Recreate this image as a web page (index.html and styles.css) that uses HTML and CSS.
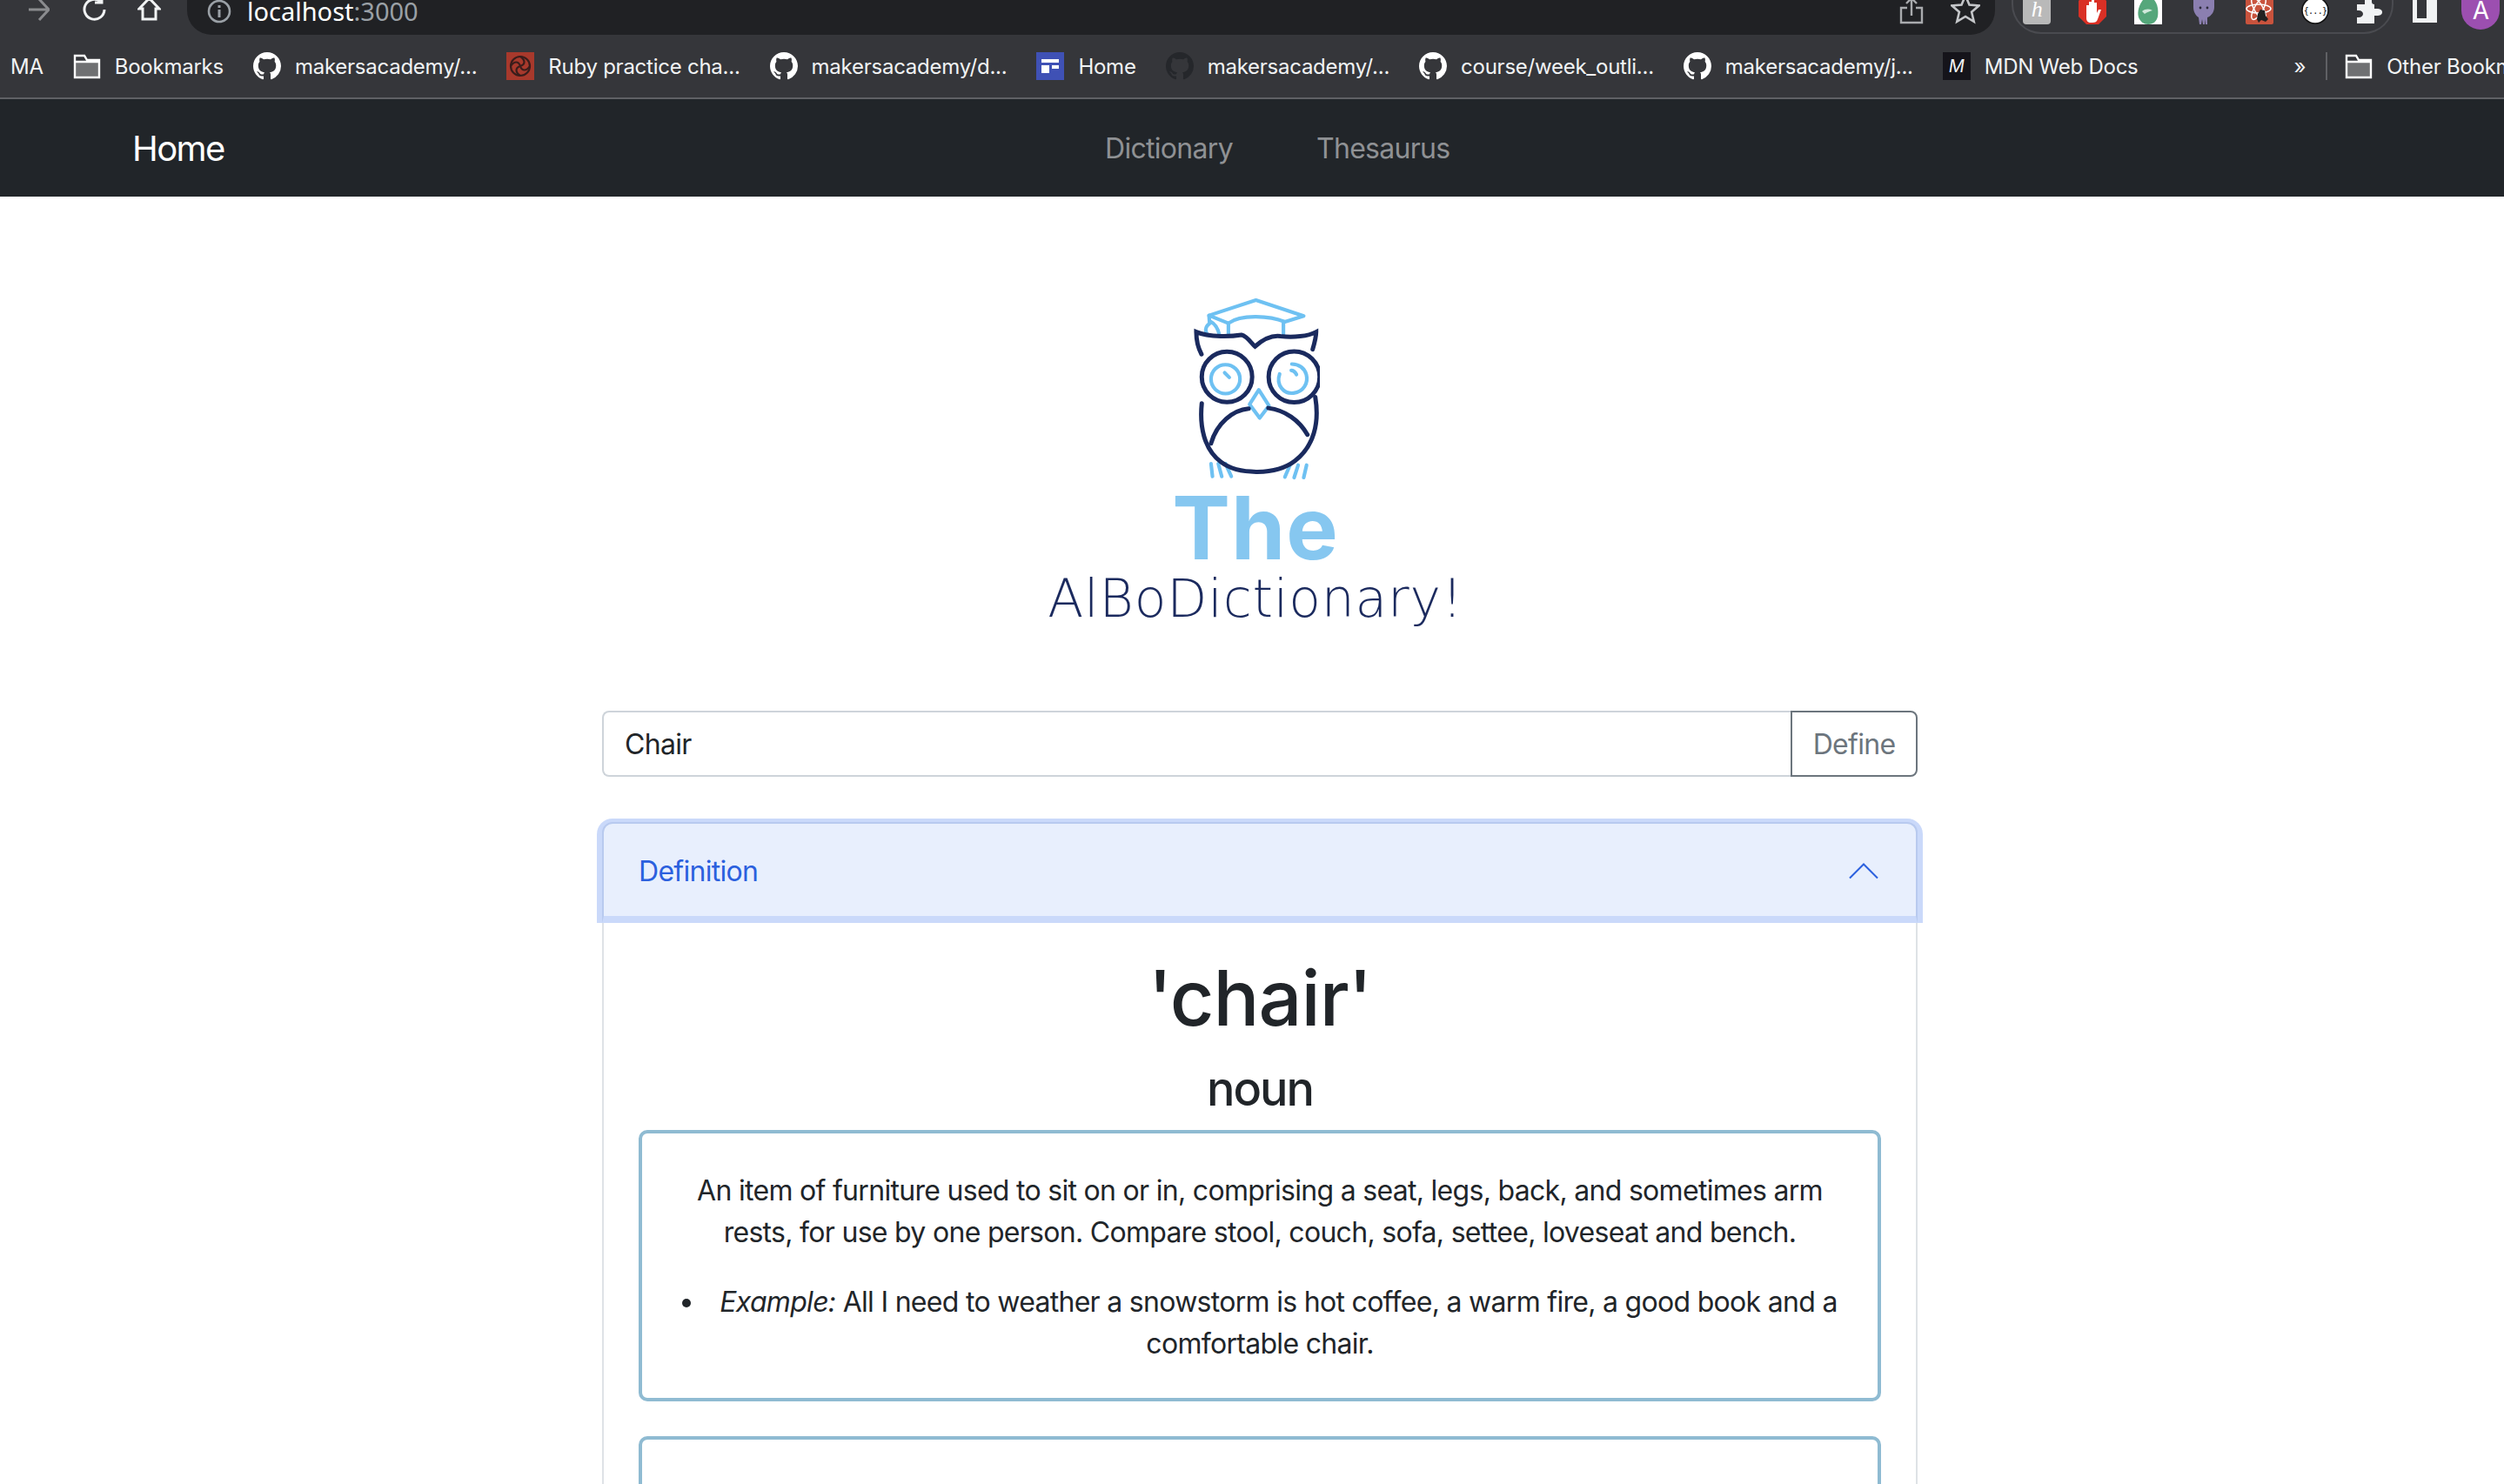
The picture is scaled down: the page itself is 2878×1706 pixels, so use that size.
FILE: index.html
```html
<!DOCTYPE html>
<html lang="en">
<head>
    <meta charset="UTF-8">
    <title>The AlBoDictionary</title>
    <link rel="stylesheet" href="styles.css">
</head>
<body>
    <svg class="sprites" width="0" height="0">
        <symbol id="gh" viewBox="0 0 16 16"><path d="M8 0C3.58 0 0 3.58 0 8c0 3.54 2.29 6.53 5.47 7.59.4.07.55-.17.55-.38 0-.19-.01-.82-.01-1.49-2.01.37-2.53-.49-2.69-.94-.09-.23-.48-.94-.82-1.13-.28-.15-.68-.52-.01-.53.63-.01 1.08.58 1.23.82.72 1.21 1.87.87 2.33.66.07-.52.28-.87.51-1.07-1.78-.2-3.64-.89-3.64-3.95 0-.87.31-1.59.82-2.15-.08-.2-.36-1.02.08-2.12 0 0 .67-.21 2.2.82.64-.18 1.32-.27 2-.27.68 0 1.36.09 2 .27 1.53-1.04 2.2-.82 2.2-.82.44 1.1.16 1.92.08 2.12.51.56.82 1.27.82 2.15 0 3.07-1.87 3.75-3.65 3.95.29.25.54.73.54 1.48 0 1.07-.01 1.93-.01 2.2 0 .21.15.46.55.38A8.013 8.013 0 0016 8c0-4.42-3.58-8-8-8z"/></symbol>
        <symbol id="folder" viewBox="0 0 32 32"><path d="M2 12h28v17H2z" fill="#6f7072"/><path d="M2 4h11l3 5h14v20H2zM2 11h28" fill="none" stroke="#fff" stroke-width="2.4"/></symbol>
    </svg>

    <div class="page">
        <!-- Browser chrome -->
        <div class="toolbar">
            <svg class="tool-icon back" width="26" height="40" viewBox="0 0 26 40"><path d="M2 18h22M14 6l11 12-11 12" fill="none" stroke="#8a8b8e" stroke-width="3"/></svg>
            <svg class="tool-icon reload" width="27" height="40" viewBox="0 0 27 40"><path d="M25 18a11.5 11.5 0 1 1-4-9M22 2v8h-8" fill="none" stroke="#f1f3f4" stroke-width="3"/></svg>
            <svg class="tool-icon home" width="27" height="40" viewBox="0 0 27 40"><path d="M13.500 5L25 17h-4v12H6V17H2z" fill="none" stroke="#f1f3f4" stroke-width="3"/></svg>
            <div class="omnibox">
                <svg class="info" width="28" height="28" viewBox="0 0 28 28"><circle cx="14" cy="14" r="12" fill="none" stroke="#9aa0a6" stroke-width="2.6"/><path d="M14 12v9M14 7v3" stroke="#9aa0a6" stroke-width="3"/></svg>
                <span class="url">localhost<span class="url-port">:3000</span></span>
                <svg class="share" width="28" height="40" viewBox="0 0 28 40"><path d="M9 13H2v17h24V13h-7M14 22V2M8 8l6-6 6 6" fill="none" stroke="#a9abae" stroke-width="2.4"/></svg>
                <svg class="star" width="34" height="40" viewBox="0 0 34 40"><path d="M17 3l4.500 10.500 11 1-8.400 7.300 2.600 11L17 27l-9.700 5.800 2.600-11L1.500 14.500l11-1z" fill="none" stroke="#c4c6c9" stroke-width="2.600"/></svg>
            </div>
            <div class="ext-pill">
                <div class="ext ext-h">h</div>
                <svg class="ext-svg" width="32" height="40" viewBox="0 0 32 40"><path d="M9 0h14l9 9v18l-9 9H9l-9-9V9z" transform="translate(0 -8)" fill="#d93025"/><path d="M9 14V6h3v6-10h3v10-12h3v12-9h3v12l2-4h3l-4 11c-1 3-3 4-6 4h-2c-3 0-5-2-5-5z" fill="#fff"/></svg>
                <svg class="ext-svg" width="32" height="40" viewBox="0 0 32 40"><path d="M0 0h32v28H0z" fill="#fff"/><path d="M10 0h13c4 5 5 12 4 19-1 5-5 9-11 9-5 0-9-3-11-8C3 13 6 5 10 0z" fill="#55a77b"/><path d="M9 13c4-3 8-3 12-1-3 1-7 2-9 4z" fill="#cfe8da"/></svg>
                <svg class="ext-svg" width="32" height="40" viewBox="0 0 32 40"><path d="M4 0h24v8c0 6-4 11-8 12v8h-2v-6l-1 6h-2l-1-6-1 6h-2l-1-8C7 18 4 14 4 8z" fill="#8b7fb0"/><circle cx="12" cy="9" r="1.400" fill="#2d2b3a"/><circle cx="20" cy="9" r="1.400" fill="#2d2b3a"/></svg>
                <svg class="ext-svg" width="32" height="40" viewBox="0 0 32 40"><path d="M0 0h32v26a2 2 0 0 1-2 2H2a2 2 0 0 1-2-2z" fill="#c9533d"/><g fill="none" stroke="#fff" stroke-width="1.500"><ellipse cx="15" cy="10" rx="14" ry="5"/><ellipse cx="15" cy="10" rx="14" ry="5" transform="rotate(60 15 10)"/><ellipse cx="15" cy="10" rx="14" ry="5" transform="rotate(120 15 10)"/></g><path d="M17 11l5 1 1 6 3 4-3 3-5-2-3 3-2-4 1-6z" fill="#222"/></svg>
                <svg class="ext-svg" width="32" height="40" viewBox="0 0 32 40"><circle cx="16" cy="12" r="15" fill="#fff" stroke="#111" stroke-width="1.500"/><text class="json-mark" x="16" y="16" text-anchor="middle">{...}</text></svg>
                <svg class="ext-svg" width="30" height="40" viewBox="0 0 30 40"><path d="M9 0h8v2c0 2 1 3 3 3h0v5h3c3 0 6 1 6 4s-3 4-6 4h-3v9H0v-7h2c3 0 5-2 5-4s-2-4-5-4H0V5h9z" fill="#f1f3f4"/></svg>
            </div>
            <svg class="panel" width="28" height="40" viewBox="0 0 28 40"><path d="M0 0h28v26H0z" fill="#f1f3f4"/><path d="M5 0h11v21H5z" fill="#35363a"/></svg>
            <div class="avatar">A</div>
        </div>

        <div class="bookmarks">
            <span class="bm-ma">MA</span>
            <div class="bm"><svg class="bm-icon"><use href="#folder"/></svg>Bookmarks</div>
            <div class="bm"><svg class="bm-icon gh"><use href="#gh"/></svg>makersacademy/...</div>
            <div class="bm"><svg class="bm-icon" viewBox="0 0 32 32"><path d="M0 0h32v32H0z" fill="#a8392c"/><g fill="none" stroke="#3a1d1b" stroke-width="2.200"><circle cx="16" cy="16" r="11"/><path d="M16 5c6 4 6 9 0 11s-6 7 0 11M5 16c4-6 9-6 11 0s7 6 11 0"/></g></svg>Ruby practice cha...</div>
            <div class="bm"><svg class="bm-icon gh"><use href="#gh"/></svg>makersacademy/d...</div>
            <div class="bm"><svg class="bm-icon" viewBox="0 0 32 32"><path d="M0 0h32v32H0z" fill="#3f51b5"/><path d="M6 8h20v4H6zM6 15h9v9H6zM18 15h8v4h-8z" fill="#fff"/></svg>Home</div>
            <div class="bm"><svg class="bm-icon gh-dark"><use href="#gh"/></svg>makersacademy/...</div>
            <div class="bm"><svg class="bm-icon gh"><use href="#gh"/></svg>course/week_outli...</div>
            <div class="bm"><svg class="bm-icon gh"><use href="#gh"/></svg>makersacademy/j...</div>
            <div class="bm"><div class="bm-icon mdn">M</div>MDN Web Docs</div>
            <span class="bm-more">»</span>
            <div class="bm bm-other"><svg class="bm-icon"><use href="#folder"/></svg>Other Bookmarks</div>
        </div>

        <!-- Navigation Bar -->
        <nav class="navbar">
            <a href="#" class="navbar-brand">Home</a>
            <div class="navbar-links">
                <a href="#">Dictionary</a>
                <a href="#">Thesaurus</a>
            </div>
        </nav>

        <div class="container">
            <div class="logo">
                <svg width="147" height="213" viewBox="270 30 440 640">
                    <g fill="none" stroke="#6ec1f2" stroke-width="12.500" stroke-linejoin="round" stroke-linecap="round">
                        <path d="M328 98L490 45 655 100 590 120C540 100 440 92 395 125z"/>
                        <path d="M395 125v42M585 120v46M328 98l2 28c-18 12-16 32-4 40M332 118c16 8 28 28 32 48"/>
                        <circle cx="385" cy="318" r="50"/>
                        <path d="M572 300c-14 40 16 70 48 66 34-4 52-34 44-64-6-22-26-36-50-36"/>
                        <path d="M382 296l16 16M612 288c8 0 14 6 18 14"/>
                        <path d="M500 355l35 55-32 42-35-47z"/>
                        <path d="M335 610l5 44M360 610l12 44M385 610l20 44M610 610l-20 46M636 615l-14 43M665 615l-10 43"/>
                    </g>
                    <g fill="none" stroke="#1a2a5e" stroke-width="15" stroke-linecap="round">
                        <path d="M302 232c-12-22-18-52-18-77 46 20 126 15 156 10 20 5 35 30 47 40 23-20 53-40 88-35 45 5 95 0 123-15 0 20-6 40-12 60"/>
                        <circle cx="390" cy="310" r="87"/>
                        <circle cx="622" cy="310" r="88"/>
                        <path d="M303 402c-8 78 7 158 67 203 60 45 190 45 255-5 65-50 85-130 70-220"/>
                        <path d="M465 420c-55 5-110 50-130 120M533 418c57 7 107 42 135 92"/>
                    </g>
                </svg>
                <div class="logo-the">The</div>
                <div class="logo-name">AlBoDictionary!</div>
            </div>

            <form class="input-group">
                <input type="text" value="Chair">
                <button type="button">Define</button>
            </form>

            <div class="accordion">
                <div class="accordion-header">
                    <span>Definition</span>
                    <svg width="40" height="40" viewBox="0 0 16 16"><path d="M1.600 11.400L8 5l6.400 6.400" fill="none" stroke="#2b60de" stroke-width="0.800"/></svg>
                </div>
                <div class="accordion-body">
                    <h1>'chair'</h1>
                    <h3>noun</h3>
                    <div class="meaning">
                        <p>An item of furniture used to sit on or in, comprising a seat, legs, back, and sometimes arm rests, for use by one person. Compare stool, couch, sofa, settee, loveseat and bench.</p>
                        <ul>
                            <li><em>Example:</em> All I need to weather a snowstorm is hot coffee, a warm fire, a good book and a comfortable chair.</li>
                        </ul>
                    </div>
                    <div class="meaning meaning-next"></div>
                </div>
            </div>
        </div>
    </div>
</body>
</html>
```

FILE: styles.css
```css
html, body {
    margin: 0;
    padding: 0;
    height: 1706px;
    overflow: hidden;
    background-color: #fff;
}

body {
    font-family: Inter, "Liberation Sans", sans-serif;
    font-size: 32px;
    letter-spacing: -0.7px;
    color: #212529;
}

.sprites {
    display: block;
}

/* The browser window is wider than the capture */
.page {
    width: 2896px;
}

/* Toolbar, cut off at the top */
.toolbar {
    display: flex;
    align-items: flex-end;
    height: 40px;
    overflow: hidden;
    background-color: #35363a;
    padding-left: 31px;
}

.tool-icon {
    flex-shrink: 0;
    margin-bottom: 7px;
}

.reload {
    margin-left: 38px;
}

.home {
    margin-left: 36px;
}

.omnibox {
    display: flex;
    align-items: flex-end;
    flex-shrink: 0;
    width: 2078px;
    height: 56px;
    margin-left: 30px;
    box-sizing: border-box;
    padding: 0 17px 0 23px;
    background-color: #202124;
    border-radius: 0 0 28px 28px;
}

.info {
    margin-bottom: 13px;
}

.url {
    flex: 1;
    margin-left: 18px;
    padding-bottom: 11px;
    font-family: "Noto Sans", sans-serif;
    font-size: 29px;
    letter-spacing: 0;
    line-height: 32px;
    color: #fff;
}

.url-port {
    color: #9aa0a6;
}

.share {
    margin-bottom: 4px;
}

.star {
    margin-left: 31px;
    margin-bottom: 8px;
}

.ext-pill {
    display: flex;
    align-items: flex-end;
    gap: 32px;
    flex-shrink: 0;
    width: 439px;
    height: 60px;
    margin-left: 19px;
    margin-bottom: 1px;
    box-sizing: border-box;
    padding-left: 11px;
    border: 2px solid #4a4b50;
    border-radius: 0 0 34px 34px;
    border-top: none;
}

.ext {
    width: 32px;
    height: 40px;
    margin-bottom: 9px;
    box-sizing: border-box;
    padding-top: 8px;
    text-align: center;
    font-family: "Liberation Serif", serif;
    font-style: italic;
    font-size: 26px;
    line-height: 30px;
    color: #fff;
    background-color: #b9b9b9;
    border-radius: 0 0 4px 4px;
}

.ext-svg {
    flex-shrink: 0;
    margin-bottom: -3px;
}

.json-mark {
    font-family: "DejaVu Sans Mono", monospace;
    font-size: 10px;
    fill: #111;
}

.panel {
    flex-shrink: 0;
    margin-left: 22px;
    margin-bottom: 0;
}

.avatar {
    flex-shrink: 0;
    width: 44px;
    height: 56px;
    margin-left: 28px;
    margin-bottom: 6px;
    text-align: center;
    font-size: 28px;
    line-height: 68px;
    color: #fff;
    background-color: #9c4fb0;
    border-radius: 0 0 22px 22px;
}

/* Bookmarks bar */
.bookmarks {
    display: flex;
    align-items: center;
    gap: 34px;
    height: 72px;
    padding-left: 12px;
    background-color: #35363a;
    border-bottom: 2px solid #5f6064;
    font-size: 24px;
    letter-spacing: -0.25px;
    color: #f1f3f4;
    white-space: nowrap;
}

.bm {
    display: flex;
    align-items: center;
    gap: 16px;
}

.bm-icon {
    flex-shrink: 0;
    width: 32px;
    height: 32px;
}

.gh {
    fill: #fff;
}

.gh-dark {
    fill: #25272b;
}

.mdn {
    text-align: center;
    font-style: italic;
    font-size: 20px;
    line-height: 32px;
    background-color: #15141a;
}

.bm-more {
    margin-left: 145px;
}

.bm-other {
    padding-left: 20px;
    border-left: 2px solid #5f6064;
    margin-left: -11px;
}

/* Navigation Bar */
.navbar {
    display: flex;
    align-items: center;
    height: 112px;
    padding-left: 152px;
    background-color: #212529;
}

.navbar a {
    text-decoration: none;
}

.navbar-brand {
    flex: 0 0 1118px;
    font-size: 40px;
    letter-spacing: -1.600px;
    color: #fff;
}

.navbar-links {
    display: flex;
    gap: 96px;
}

.navbar-links a {
    color: #8f9194;
}

.container {
    width: 1512px;
    margin: 0 auto;
}

/* Logo */
.logo {
    display: flex;
    flex-direction: column;
    align-items: center;
    margin-right: 10px;
    padding-top: 114px;
    height: 477px;
}

.logo-the {
    margin-top: 14px;
    font-size: 100px;
    font-weight: 700;
    letter-spacing: 1px;
    line-height: 80px;
    color: #86c7f0;
}

.logo-name {
    margin-top: 10px;
    font-family: "DejaVu Sans", sans-serif;
    font-size: 60px;
    font-weight: 200;
    letter-spacing: 0.8px;
    line-height: 62px;
    color: #1b2a5e;
}

/* Search */
.input-group {
    display: flex;
    height: 76px;
}

.input-group input {
    flex: 1;
    min-width: 0;
    box-sizing: border-box;
    padding: 12px 24px;
    font-family: inherit;
    font-size: 32px;
    letter-spacing: inherit;
    color: #212529;
    border: 2px solid #ced4da;
    border-right: none;
    border-radius: 8px 0 0 8px;
    outline: none;
}

.input-group button {
    width: 146px;
    font-family: inherit;
    font-size: 32px;
    letter-spacing: inherit;
    color: #6c757d;
    background-color: #fff;
    border: 2px solid #6c757d;
    border-radius: 0 8px 8px 0;
}

/* Accordion */
.accordion {
    margin-top: 52px;
    border: 2px solid #dee2e6;
    border-radius: 12px 12px 0 0;
}

.accordion-header {
    display: flex;
    justify-content: space-between;
    align-items: center;
    height: 116px;
    margin: -2px -2px 0;
    box-sizing: border-box;
    padding: 2px 40px 0;
    color: #2b60de;
    background-color: #e8effd;
    border: solid #b8caef;
    border-width: 2px 2px 8px;
    border-bottom-color: #cad9fa;
    border-radius: 12px 12px 0 0;
    box-shadow: 0 2px 0 6px #cad9fa;
    clip-path: inset(-4px -6px 0 -6px);
}

.accordion-body {
    padding: 38px 40px 0;
    text-align: center;
}

.accordion-body h1 {
    margin: 0 0 23px;
    font-size: 88px;
    font-weight: 500;
    letter-spacing: -1px;
    line-height: 96px;
}

.accordion-body h3 {
    margin: 0 0 14px;
    font-size: 54px;
    font-weight: 500;
    letter-spacing: -2px;
    line-height: 67px;
}

.meaning {
    margin-bottom: 40px;
    padding: 42px 24px 6px;
    border: 4px solid #8fbbd2;
    border-radius: 10px;
    line-height: 48px;
}

.meaning p {
    margin: 0 0 32px;
}

.meaning ul {
    margin: 0 0 32px;
    padding: 0;
    list-style-position: inside;
}

.meaning-next {
    height: 300px;
}
```
